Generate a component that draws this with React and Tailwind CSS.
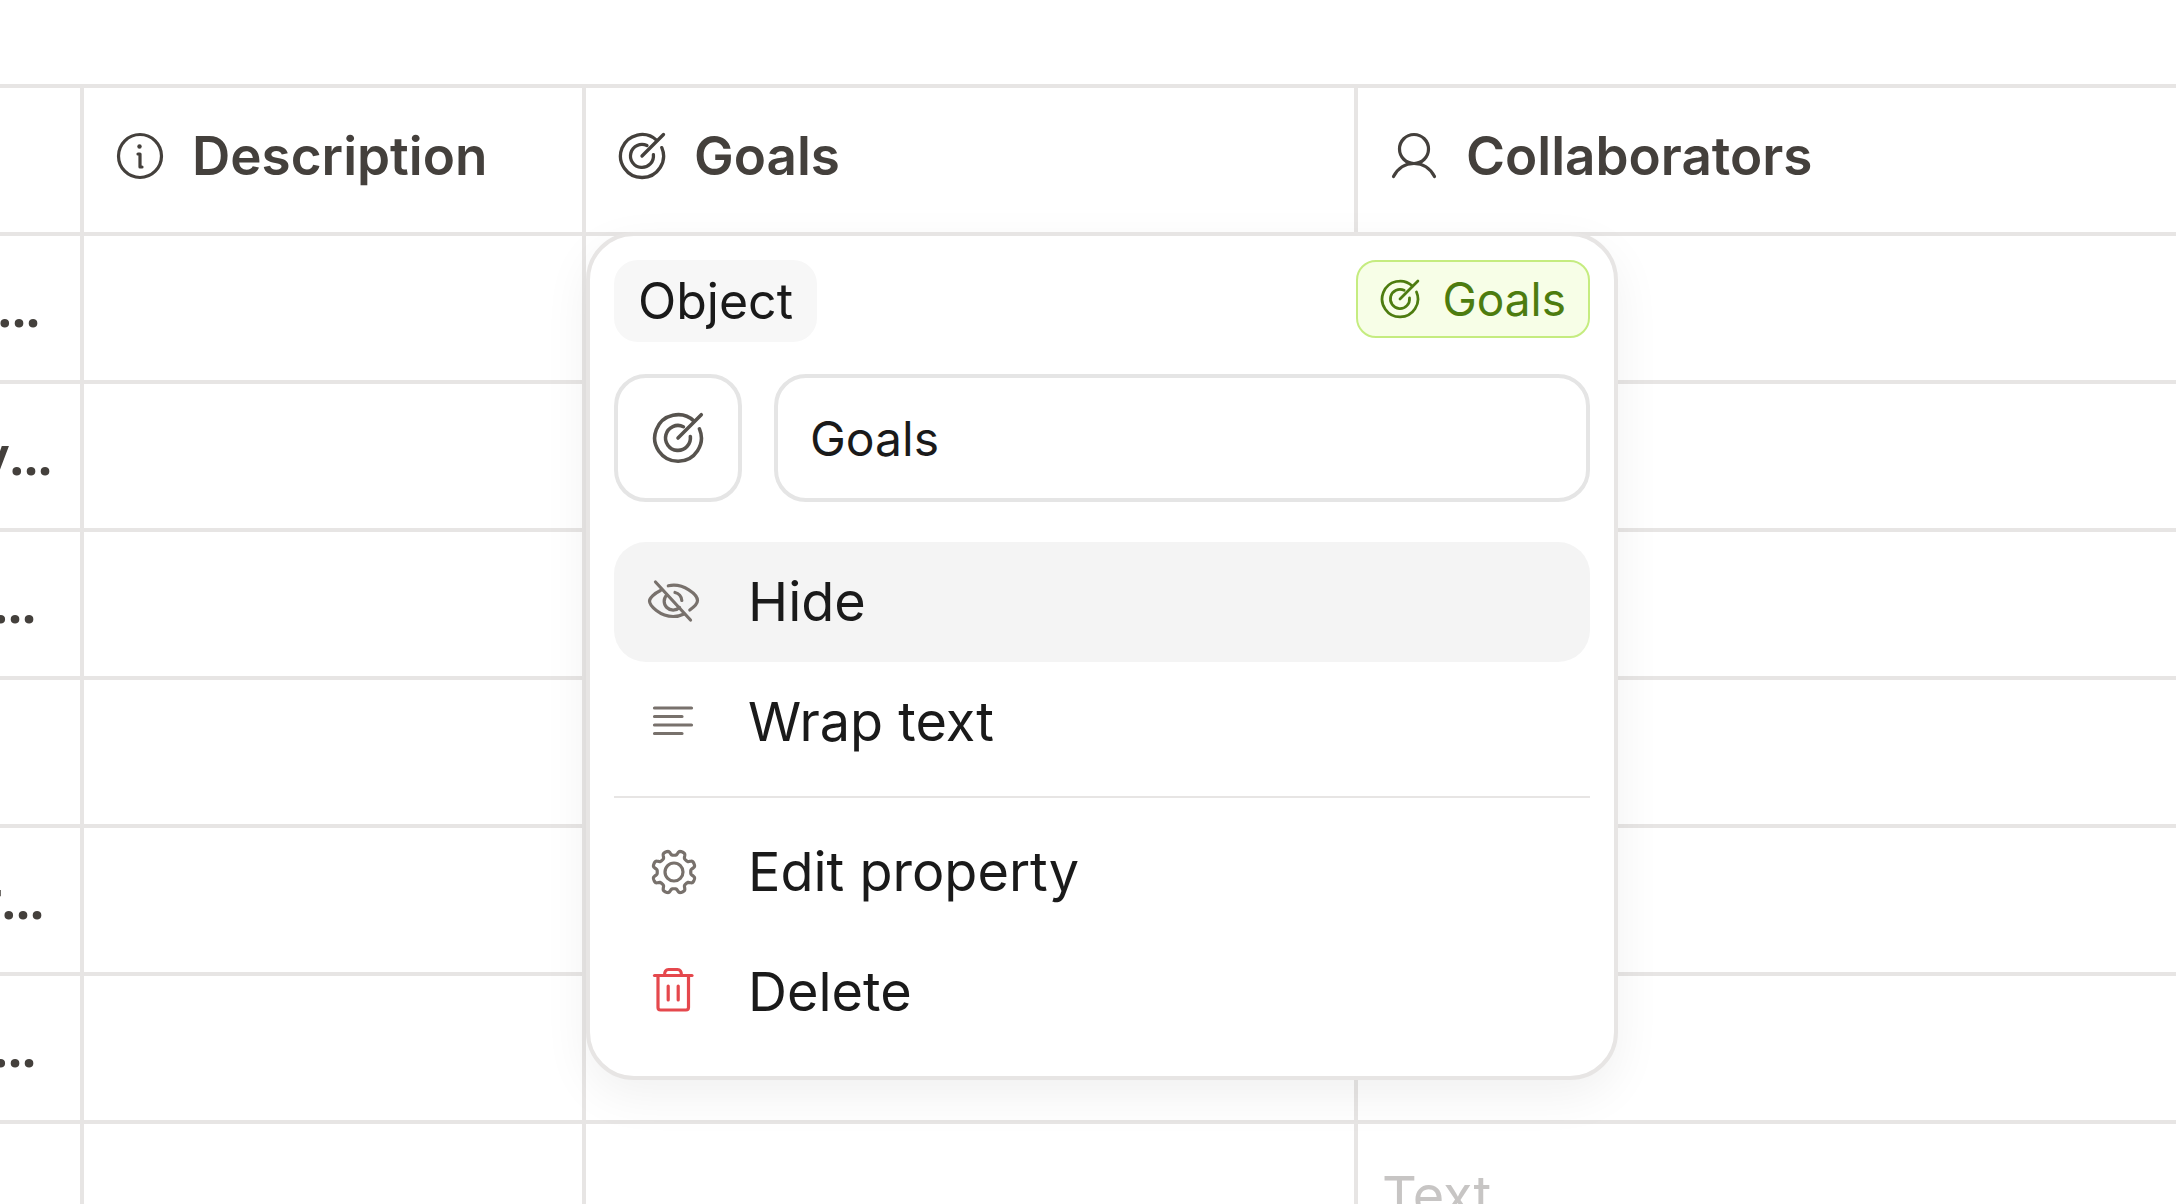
const borderTone = 'border-[#e7e5e4]';

const TargetIcon = ({ className }) => (
  <svg viewBox="0 0 48 48" fill="none" stroke="currentColor" strokeWidth="3.3" strokeLinecap="round" className={className}>
    <path d="M38.800 8.400 A21.500 21.500 0 1 0 43.800 15.600" />
    <path d="M29 13.600 A11.500 11.500 0 1 0 35.400 22.600" />
    <path d="M24 24 L45.500 2.500" />
  </svg>
);

const InfoIcon = ({ className }) => (
  <svg viewBox="0 0 48 48" fill="none" stroke="currentColor" strokeWidth="3.2" strokeLinecap="round" strokeLinejoin="round" className={className}>
    <circle cx="24" cy="24" r="21.5" />
    <path d="M22 22 H24 V35 H26" />
    <circle cx="23.5" cy="14.500" r="2.2" fill="currentColor" stroke="none" />
  </svg>
);

const PersonIcon = ({ className }) => (
  <svg viewBox="0 0 48 48" fill="none" stroke="currentColor" strokeWidth="3.2" strokeLinecap="round" className={className}>
    <circle cx="24" cy="17" r="14.500" />
    <path d="M3.500 44.500 C8 36 15.500 31.500 24 31.500 C32.500 31.500 40 36 44.500 44.500" />
  </svg>
);

const HideIcon = ({ className }) => (
  <svg viewBox="0 0 56 56" fill="none" stroke="currentColor" strokeWidth="3.2" strokeLinecap="round" strokeLinejoin="round" className={className}>
    <path d="M9.500 8 L44.500 46" />
    <path d="M14.500 16.500 C8 19.500 3.500 24.500 3.500 27 C3.500 31.500 14 42.500 27.200 42.500 C31.500 42.500 35 41.500 38 40" />
    <path d="M22.300 11.800 C38 8.500 51.500 21 51.500 26.500 C51.500 29 48 33 43.800 36" />
    <path d="M20.800 20.800 A8.800 8.800 0 0 0 33.500 33.500" />
    <path d="M29 18.500 A8.800 8.800 0 0 1 35.800 26.500" />
  </svg>
);

const WrapIcon = ({ className }) => (
  <svg viewBox="0 0 56 56" fill="none" stroke="currentColor" strokeWidth="3.2" strokeLinecap="round" className={className}>
    <path d="M8.500 14 H45.500 M8.500 22.500 H36 M8.500 31 H45.500 M8.500 39.500 H36" />
  </svg>
);

// Outline of an eight-toothed cog with rounded teeth
const gearPath = Array.from({ length: 240 }, (_, i) => {
  const angle = (i / 240) * Math.PI * 2;
  const r = 19.2 + 2.5 * Math.tanh(-2.2 * Math.cos(8 * angle));
  return `${i ? 'L' : 'M'}${(28 + r * Math.cos(angle)).toFixed(2)} ${(28 + r * Math.sin(angle)).toFixed(2)}`;
}).join('') + 'Z';

const GearIcon = ({ className }) => (
  <svg viewBox="0 0 56 56" fill="none" stroke="currentColor" strokeWidth="3.2" strokeLinejoin="round" className={className}>
    <circle cx="28" cy="28" r="9" />
    <path d={gearPath} />
  </svg>
);

const TrashIcon = ({ className }) => (
  <svg viewBox="0 0 56 56" fill="none" stroke="currentColor" strokeWidth="3.2" strokeLinecap="round" strokeLinejoin="round" className={className}>
    <path d="M8.500 11.500 H46" />
    <path d="M18.500 11.500 C18.500 7.500 20 5.500 22.500 5.500 H31.500 C34 5.500 35.500 7.500 35.500 11.500" />
    <path d="M12 11.500 V43.500 A2.500 2.500 0 0 0 14.500 46 H40 A2.500 2.500 0 0 0 42.500 43.500 V11.500" />
    <path d="M22.200 22 V36 M32.200 22 V36" />
  </svg>
);

const columns = [
  { label: 'Description', icon: InfoIcon },
  { label: 'Goals', icon: TargetIcon, menu: true },
  { label: 'Collaborators', icon: PersonIcon },
];

const rows = [
  { name: '', cut: true, inset: 'pr-10' },
  { name: 'y', cut: true, inset: 'pr-7' },
  { name: '', cut: true, inset: 'pr-11' },
  { name: '', inset: 'pr-10' },
  { name: 'r', cut: true, inset: 'pr-9' },
  { name: '', cut: true, inset: 'pr-11' },
  { name: '', inset: 'pr-10', collaborators: 'Text' },
];

const MenuItem = ({ icon: Icon, label, active, danger }) => (
  <button
    type="button"
    className={`flex h-[120px] w-full items-center gap-[46px] rounded-[32px] px-8 text-left text-[54px] leading-[72px] text-[#1a1a1a] ${
      active ? 'bg-[#f4f4f4]' : ''
    }`}
  >
    <Icon className={`h-14 w-14 shrink-0 ${danger ? 'text-[#e5484d]' : 'text-[#78716c]'}`} />
    <span>{label}</span>
  </button>
);

const PropertyMenu = () => (
  <div className={`absolute top-full left-0 z-10 w-[1032px] rounded-[48px] border-4 ${borderTone} bg-white p-6 font-normal text-[#1a1a1a] shadow-[0_16px_48px_rgba(0,0,0,0.06)]`}>
    <div className="flex items-start justify-between">
      <span className="rounded-3xl bg-[#f7f7f7] px-6 py-2 text-[50px] leading-[66px]">Object</span>
      <span className="flex items-center gap-[22px] rounded-[20px] border-2 border-[#c5ec80] bg-[#f7fee7] px-[22px] py-1 text-[46px] leading-[66px] text-[#4d7c0f]">
        <TargetIcon className="h-10 w-10" />
        Goals
      </span>
    </div>

    <div className="mt-8 flex gap-8">
      <button type="button" aria-label="Change icon" className="flex h-32 w-32 shrink-0 items-center justify-center rounded-[32px] border-4 border-[#e5e5e5] text-[#57534e]">
        <TargetIcon className="h-[52px] w-[52px]" />
      </button>
      <input
        type="text"
        aria-label="Property name"
        defaultValue="Goals"
        className="h-32 min-w-0 flex-1 rounded-[32px] border-4 border-[#e5e5e5] px-8 text-[48px] leading-[66px] outline-none"
      />
    </div>

    <div className="mt-10">
      <MenuItem icon={HideIcon} label="Hide" active />
      <MenuItem icon={WrapIcon} label="Wrap text" />
      <hr className={`my-3.5 border-t-2 ${borderTone}`} />
      <MenuItem icon={GearIcon} label="Edit property" />
      <MenuItem icon={TrashIcon} label="Delete" danger />
    </div>
  </div>
);

const App = () => {
  return (
    <div className="h-screen overflow-hidden bg-white pt-21 font-['Inter',sans-serif] text-[#44403c] [font-optical-sizing:none]">
      <table className="w-full table-fixed border-separate border-spacing-0">
        <colgroup>
          <col className="w-[84px]" />
          <col className="w-[502px]" />
          <col className="w-[772px]" />
          <col />
        </colgroup>
        <thead>
          <tr>
            <th aria-label="Name" className={`h-[152px] border-y-4 border-r-4 ${borderTone}`} />
            {columns.map(({ label, icon: Icon, menu }) => (
              <th key={label} scope="col" className={`relative h-[152px] border-y-4 border-r-4 last:border-r-0 ${borderTone} p-0 px-8 pb-2 text-left font-semibold`}>
                <div className="flex items-center gap-7 text-[53px] leading-[72px]">
                  <Icon className="h-12 w-12 shrink-0" />
                  <span>{label}</span>
                </div>
                {menu && <PropertyMenu />}
              </th>
            ))}
          </tr>
        </thead>
        <tbody>
          {rows.map((row, i) => (
            <tr key={i}>
              <td className={`h-[148px] border-r-4 border-b-4 ${borderTone} p-0`}>
                <div className={`flex items-baseline justify-end overflow-hidden ${row.inset} text-[53px] leading-[72px] font-semibold`}>
                  {row.name}
                  {row.cut && <span className="font-['Noto_Sans',sans-serif] text-[50px] font-bold">...</span>}
                </div>
              </td>
              <td className={`h-[148px] border-r-4 border-b-4 ${borderTone}`} />
              <td className={`h-[148px] border-r-4 border-b-4 ${borderTone}`} />
              <td className={`h-[148px] border-b-4 ${borderTone} p-0 px-6 text-[54px] leading-[72px] text-[#c7c5c4]`}>{row.collaborators}</td>
            </tr>
          ))}
        </tbody>
      </table>
    </div>
  );
};

export default App;
